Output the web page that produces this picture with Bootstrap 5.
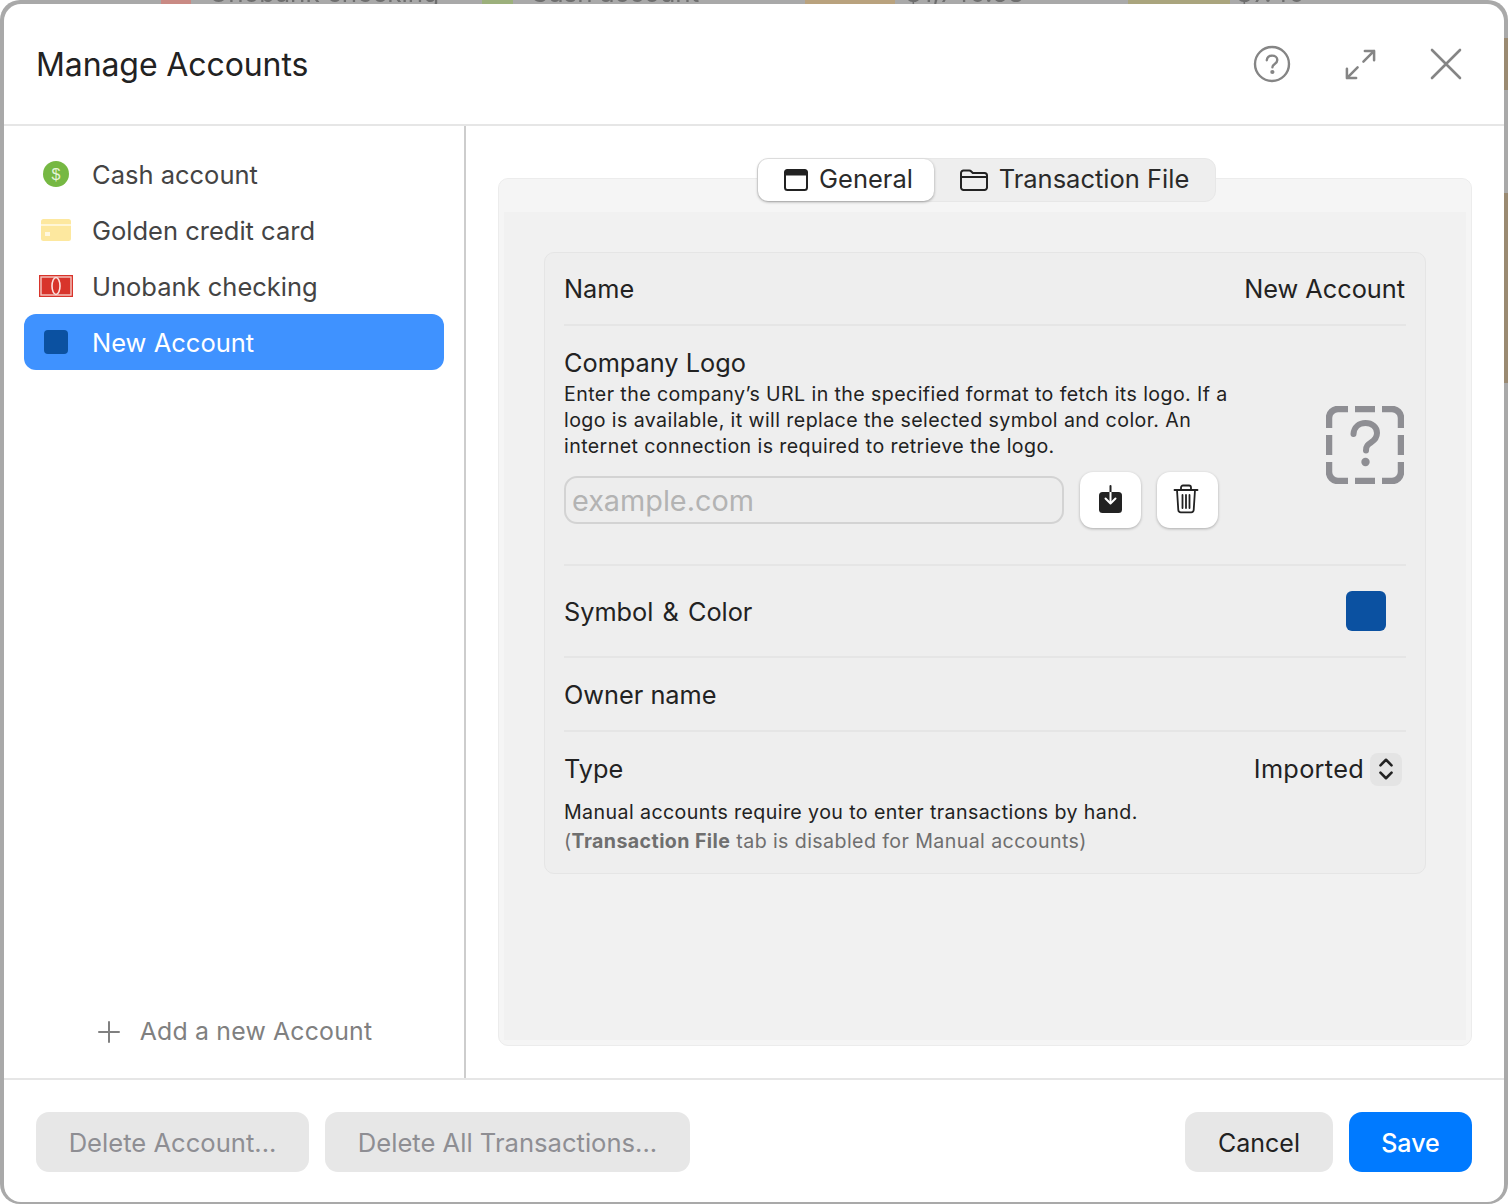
<!doctype html>
<html lang="en">
<head>
<meta charset="utf-8">
<title>Manage Accounts</title>
<link href="https://cdn.jsdelivr.net/npm/bootstrap@5.3.0/dist/css/bootstrap.min.css" rel="stylesheet">
<style>
html,body{height:100%;margin:0}
body{width:1508px;height:1204px;overflow:hidden;background:#fff;font-family:Inter,"Liberation Sans",sans-serif;color:#222;position:relative}
.behind{position:absolute;inset:0;background:#a9a9a9;border-radius:20px;overflow:hidden}
.bk-block{position:absolute;top:0;height:4px}
.bk-tan{background:#b9a27e}
.bk-olive{background:#aaa57e}
.bk-red{background:#c98a84}
.bk-grn{background:#9cb07c}
.bk-edge{position:absolute;left:1504px;width:4px;background:#9a8a72}
.bk-txt{position:absolute;top:-20px;font-size:26px;line-height:26px;color:#6e6e6e;white-space:nowrap;filter:blur(.6px)}
.win{position:absolute;left:4px;top:4px;width:1500px;height:1198px;background:#fff;border-radius:17px;display:flex;flex-direction:column;overflow:hidden}
.win-head{height:122px;flex:none;display:flex;align-items:center;padding:0 42px 0 32px;border-bottom:2px solid #e6e6e6}
.win-title{font-size:32px;font-weight:400;margin:0;padding-top:2px;letter-spacing:-.1px;color:#222;line-height:1}
.head-ico{display:flex;align-items:center}
.win-body{flex:1;display:flex;min-height:0}
.side{width:462px;flex:none;border-right:2px solid #cdcdcd;padding:20px 20px 0 20px;display:flex;flex-direction:column;justify-content:space-between}
.acct-list{display:flex;flex-direction:column}
.acct{height:56px;display:flex;align-items:center;border-radius:12px;padding:0 0 0 12px;font-size:25.5px;color:#444;width:420px}
.acct-txt{padding-top:2px}
.acct-ico{width:40px;display:flex;justify-content:center;margin-right:16px}
.acct.on{background:#3f92ff;color:#fff}
.add-row{height:32px;display:flex;align-items:center;justify-content:center;color:#808080;font-size:24.8px;margin-bottom:30px;padding-left:1px;letter-spacing:.2px}
.main{flex:1;padding:52px 32px 32px 32px;display:flex;min-width:0}
.panel{position:relative;flex:1;border:1px solid #ececec;border-radius:10px;background:#f5f5f5;padding:33px 5px 5px 5px;display:flex}
.panel-in{flex:1;background:#f1f1f1;padding:40px 40px 0 40px}
.tabs{position:absolute;left:258px;top:-21px;width:459px;height:44px;background:#eeeeee;border-radius:11px;border:1px solid #e7e7e7;display:flex;align-items:center;font-size:25.5px;color:#2a2a2a}
.seg{height:42px;display:flex;align-items:center;justify-content:center;gap:11px;line-height:1}
.seg-txt{padding-bottom:2px}
.seg.on{width:176px;background:#fff;border-radius:10px;box-shadow:0 1px 3px rgba(0,0,0,.35);padding-left:5px}
.seg.off{flex:1}
.grp{background:#eeeeee;border:1px solid #e5e5e5;border-radius:10px;padding:0 19px;height:622px}
.rw{border-bottom:2px solid #e5e5e5}
.rw:last-child{border-bottom:0}
.lab{font-size:25.3px;line-height:32px;color:#222}
.nudge{padding-top:2px}
.rw-name{height:73px;display:flex;justify-content:space-between;align-items:center;padding-right:1px}
.rw-logo{height:240px;display:flex;justify-content:space-between;padding-top:21px}
.desc{font-size:19.6px;line-height:26px;color:#222;letter-spacing:.41px;width:680px;margin:2px 0 0}
.url{width:500px;height:48px;background:#ededed;border:2px solid #d3d3d3;border-radius:13px;font-size:28.8px;padding:0 6px;color:#222;box-shadow:none}
.url::placeholder{color:#b3b3b3}
.sq-btn{width:61px;height:56px;background:#fff;border:0;border-radius:13px;box-shadow:0 1px 3px rgba(0,0,0,.28);display:flex;align-items:center;justify-content:center;padding:0 0 3px}
.url-row{display:flex;align-items:center;gap:16px;margin-top:13px}
.rw-sym{height:92px;display:flex;justify-content:space-between;align-items:center;padding-right:20px}
.sym-txt{word-spacing:2px}
.swatch{width:40px;height:40px;border-radius:6px;background:#0b51a1}
.rw-own{height:74px;display:flex;align-items:center}
.type-top{display:flex;justify-content:space-between;align-items:center;height:32px;margin-top:21px}
.stepper{width:32px;height:33px;background:#e4e4e4;border-radius:8px;display:flex;align-items:center;justify-content:center;margin:0 4px 0 6px}
.type-val{display:flex;align-items:center;letter-spacing:.3px}
.hint{font-size:19.6px;line-height:29px;letter-spacing:.41px;margin:13px 0 0}
.hint-mute{color:#6f6f6f}
.win-foot{height:124px;flex:none;border-top:2px solid #e6e6e6;display:flex;justify-content:space-between;padding:32px 32px 0 32px}
.f-btn{height:60px;border-radius:13px;font-size:25.6px;border:0;padding:3px 0 0}
.f-dis,.f-dis:disabled{background:#e7e7e7;color:#8e8e93;opacity:1}
.f-can,.f-can:hover{background:#e7e7e7;color:#222;font-size:25px}
.f-sav,.f-sav:hover{background:#007aff;color:#fff;font-weight:500;font-size:25px}
.w1{width:273px}.w2{width:365px}.w3{width:148px}.w4{width:123px}
</style>
</head>
<body>
<div class="behind" aria-hidden="true">
  <span class="bk-block bk-red" style="left:161px;width:30px"></span>
  <span class="bk-txt" style="left:209px">Unobank checking</span>
  <span class="bk-block bk-grn" style="left:482px;width:31px"></span>
  <span class="bk-txt" style="left:530px">Cash account</span>
  <span class="bk-block bk-tan" style="left:805px;width:90px"></span>
  <span class="bk-txt" style="left:905px">$1,740.58</span>
  <span class="bk-block bk-olive" style="left:1128px;width:102px"></span>
  <span class="bk-txt" style="left:1236px">$7.40</span>
  <span class="bk-edge" style="top:38px;height:52px"></span>
  <span class="bk-edge" style="top:193px;height:190px"></span>
</div>
<div class="win">
  <header class="win-head justify-content-between">
    <h1 class="win-title">Manage Accounts</h1>
    <div class="head-ico">
      <svg width="38" height="38" viewBox="0 0 38 38" fill="none" stroke="#858585" stroke-width="2.4" stroke-linecap="round" stroke-linejoin="round"><circle cx="19" cy="19" r="17"/><path d="M13.800 15.200c.3-3 2.500-4.600 5.300-4.600 3 0 5.200 1.800 5.200 4.300 0 2-1.100 3-2.600 4-1.400.9-2.300 1.600-2.300 3.300"/><circle cx="19.400" cy="27" r=".9" fill="#858585"/></svg>
      <svg style="margin-left:53px" width="33" height="33" viewBox="0 0 34 34" fill="none" stroke="#858585" stroke-width="2.600" stroke-linecap="round" stroke-linejoin="round"><path d="M20 14 31 3M21.500 3H31v9.500M14 20 3 31M3 21.500V31h9.500"/></svg>
      <svg style="margin-left:53px" width="32" height="32" viewBox="0 0 32 32" fill="none" stroke="#858585" stroke-width="2.600" stroke-linecap="round"><path d="M2 2l28 28M30 2 2 30"/></svg>
    </div>
  </header>
  <div class="win-body">
    <aside class="side">
      <div class="acct-list">
        <div class="acct"><span class="acct-ico"><svg width="26" height="26" viewBox="0 0 26 26"><circle cx="13" cy="13" r="13" fill="#76b843"/><text x="13" y="18.800" text-anchor="middle" font-size="16" fill="#e6f4d8" font-family="Liberation Sans">$</text></svg></span><span class="acct-txt">Cash account</span></div>
        <div class="acct"><span class="acct-ico"><svg width="30" height="22" viewBox="0 0 30 22"><rect width="30" height="22" rx="2.500" fill="#fde89f"/><rect y="5" width="30" height="2" fill="#fff6d6"/><rect x="4" y="13" width="5" height="4" fill="#fff8e0"/></svg></span><span class="acct-txt">Golden credit card</span></div>
        <div class="acct"><span class="acct-ico"><svg width="34" height="22" viewBox="0 0 34 22"><rect width="34" height="22" fill="#d8342b"/><rect x="2" y="2" width="30" height="18" fill="none" stroke="#f5c9c4" stroke-width="1.400"/><ellipse cx="17" cy="11" rx="4" ry="8.500" fill="#d8342b" stroke="#fbe4e1" stroke-width="1.600"/></svg></span><span class="acct-txt">Unobank checking</span></div>
        <div class="acct on"><span class="acct-ico"><span class="d-block rounded-1" style="width:24px;height:24px;background:#0b51a1"></span></span><span class="acct-txt">New Account</span></div>
      </div>
      <div class="add-row"><svg style="margin-right:19px" width="24" height="24" viewBox="0 0 24 24" stroke="#808080" stroke-width="2" stroke-linecap="round"><path d="M12 2v20M2 12h20"/></svg>Add a new Account</div>
    </aside>
    <main class="main">
      <section class="panel">
        <div class="tabs">
          <div class="seg on"><svg width="24" height="22" viewBox="0 0 24 22"><rect x="1" y="1" width="22" height="20" rx="2.500" fill="#fff" stroke="#222" stroke-width="2"/><path d="M1 3.500A2.500 2.500 0 0 1 3.500 1h17A2.500 2.500 0 0 1 23 3.500V6H1z" fill="#222" stroke="#222"/></svg><span class="seg-txt">General</span></div>
          <div class="seg off"><svg width="28" height="22" viewBox="0 0 28 22" fill="none" stroke="#222" stroke-width="2" stroke-linejoin="round"><path d="M1 4a2.500 2.500 0 0 1 2.500-2.500h5.600c1 0 1.600.3 2.200 1L12.800 4h11.700A2.500 2.500 0 0 1 27 6.500V18.500a2.500 2.500 0 0 1-2.500 2.500h-21A2.500 2.500 0 0 1 1 18.500z"/><path d="M1 8h26"/></svg><span class="seg-txt">Transaction File</span></div>
        </div>
        <div class="panel-in">
          <div class="grp">
            <div class="rw rw-name lab"><span>Name</span><span>New Account</span></div>
            <div class="rw rw-logo">
              <div>
                <div class="lab">Company Logo</div>
                <p class="desc">Enter the company’s URL in the specified format to fetch its logo. If a logo is available, it will replace the selected symbol and color. An internet connection is required to retrieve the logo.</p>
                <div class="url-row">
                  <input class="form-control url" placeholder="example.com" aria-label="Company URL">
                  <button class="btn sq-btn" type="button" aria-label="Fetch"><svg width="24" height="28" viewBox="0 0 24 28"><rect x="0" y="7" width="23" height="21" rx="3.500" fill="#222"/><path d="M11.500 1v16" stroke="#222" stroke-width="2" stroke-linecap="round"/><path d="M11.500 7v11" stroke="#fff" stroke-width="2"/><path d="M6.500 13.500l5 5 5-5" fill="none" stroke="#fff" stroke-width="2" stroke-linecap="round" stroke-linejoin="round"/></svg></button>
                  <button class="btn sq-btn" type="button" aria-label="Delete"><svg class="me-1" width="26" height="30" viewBox="0 0 26 30" fill="none" stroke="#222" stroke-width="1.800" stroke-linecap="round" stroke-linejoin="round"><path d="M1.500 6h23M8 6V3.500A2 2 0 0 1 10 1.500h6a2 2 0 0 1 2 2V6M4 6l1.300 20a2.500 2.500 0 0 0 2.500 2.300h10.400a2.500 2.500 0 0 0 2.500-2.300L22 6M9.500 11v13M13 11v13M16.500 11v13"/></svg></button>
                </div>
              </div>
              <svg class="flex-none" style="margin:59px 2px 0 0" width="78" height="78" viewBox="0 0 78 78" fill="none" stroke="#8e8e93" stroke-width="6.500"><path d="M3 22V12a9 9 0 0 1 9-9h10M29 3h20M56 3h10a9 9 0 0 1 9 9v10M75 29v20M75 56v10a9 9 0 0 1-9 9H56M49 75H29M22 75H12a9 9 0 0 1-9-9V56M3 49V29"/><path d="M27.500 28c.5-7 5.500-11 12-11 6.500 0 11.500 4 11.500 10 0 5-3 7.500-6 9.500-3 2-5 3.500-5 8" stroke-width="6" stroke-linecap="round"/><circle cx="39.500" cy="56" r="4.200" fill="#8e8e93" stroke="none"/></svg>
            </div>
            <div class="rw rw-sym lab"><span class="nudge sym-txt">Symbol &amp; Color</span><span class="swatch"></span></div>
            <div class="rw rw-own lab"><span class="nudge">Owner name</span></div>
            <div class="rw">
              <div class="type-top lab"><span>Type</span><span class="type-val"><span>Imported</span><span class="stepper"><svg width="16" height="24" viewBox="0 0 16 26" fill="none" stroke="#222" stroke-width="2.800" stroke-linecap="round" stroke-linejoin="round"><path d="M2 9l6-6 6 6M2 17l6 6 6-6"/></svg></span></span></div>
              <p class="hint">Manual accounts require you to enter transactions by hand.<br><span class="hint-mute">(<b class="fw-bold">Transaction File</b> tab is disabled for Manual accounts)</span></p>
            </div>
          </div>
        </div>
      </section>
    </main>
  </div>
  <footer class="win-foot">
    <div class="d-flex gap-3">
      <button class="btn f-btn f-dis w1" disabled>Delete Account...</button>
      <button class="btn f-btn f-dis w2" disabled>Delete All Transactions...</button>
    </div>
    <div class="d-flex gap-3">
      <button class="btn f-btn f-can w3">Cancel</button>
      <button class="btn f-btn f-sav w4">Save</button>
    </div>
  </footer>
</div>
<script src="https://cdn.jsdelivr.net/npm/bootstrap@5.3.0/dist/js/bootstrap.bundle.min.js"></script>
</body>
</html>
